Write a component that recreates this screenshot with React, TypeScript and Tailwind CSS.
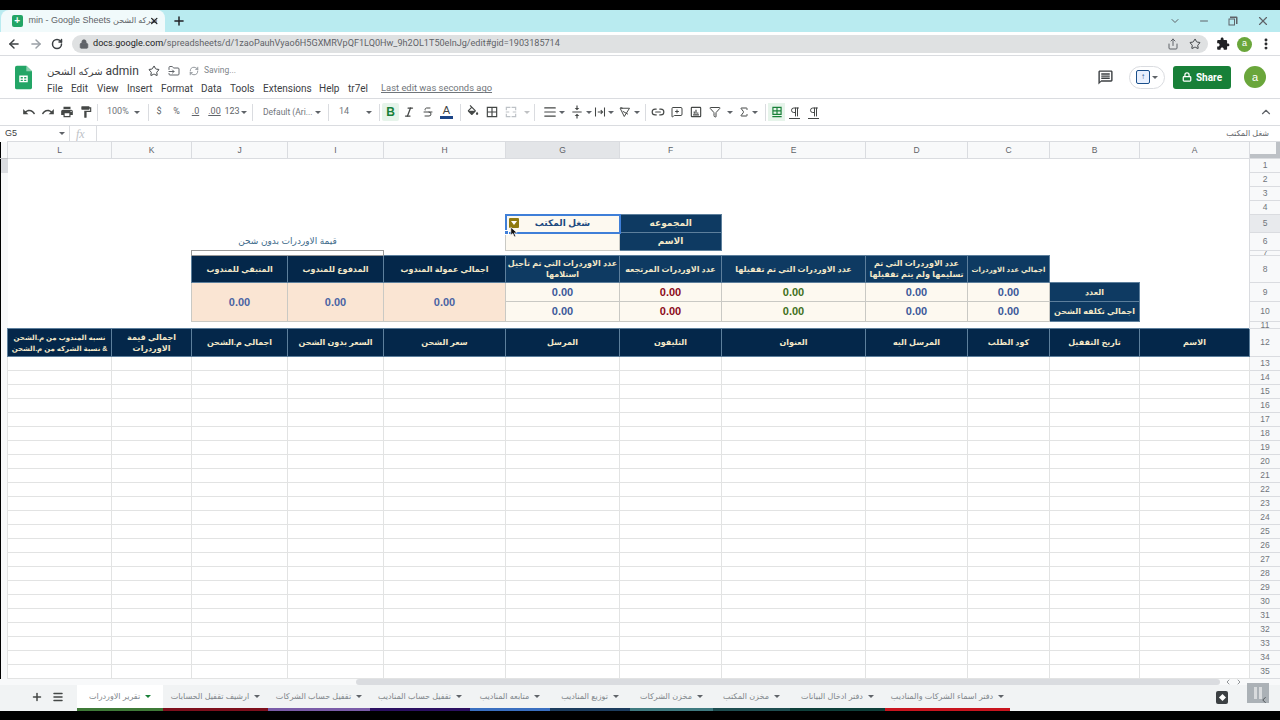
import { ReactNode } from "react";
import {
  ArrowLeft,
  ArrowRight,
  RotateCw,
  Lock,
  Star,
  Share,
  Plus,
  X,
  Minus,
  ChevronDown,
  ChevronUp,
  ChevronLeft,
  ChevronRight,
  EllipsisVertical,
  FolderInput,
  RefreshCw,
  Italic,
  Strikethrough,
  Link2,
  MessageSquarePlus,
  Sigma,
  Pilcrow,
  Menu,
  AlignJustify,
  Funnel,
} from "lucide-react";

const arabic = "font-['Liberation_Sans','DejaVu_Sans',sans-serif]";

const columns = ["L", "K", "J", "I", "H", "G", "F", "E", "D", "C", "B", "A"];

const sheetTabs = [
  { name: "تقرير الاوردرات", w: "w-[86px]", strip: "bg-[#3f7a38]", active: true },
  { name: "ارشيف تقفيل الحسابات", w: "w-[105px]", strip: "bg-[#7d0f1c]" },
  { name: "تقفيل حساب الشركات", w: "w-[102px]", strip: "bg-[#7a5ca8]" },
  { name: "تقفيل حساب المناديب", w: "w-[100px]", strip: "bg-[#2c1062]" },
  { name: "متابعه المناديب", w: "w-[80px]", strip: "bg-[#3a6fc0]" },
  { name: "توزيع المناديب", w: "w-[80px]", strip: "bg-[#1c3c5e]" },
  { name: "مخزن الشركات", w: "w-[83px]", strip: "bg-[#3f7a80]" },
  { name: "مخزن المكتب", w: "w-[77px]", strip: "bg-[#1e4d50]" },
  { name: "دفتر ادخال البيانات", w: "w-[95px]", strip: "bg-[#0f3f3a]" },
  { name: "دفتر اسماء الشركات والمناديب", w: "w-[125px]", strip: "bg-[#c8141e]" },
];

function Material({ d, className = "w-3.5 h-3.5" }: { d: string; className?: string }) {
  return (
    <svg viewBox="0 0 24 24" fill="currentColor" className={className}>
      <path d={d} />
    </svg>
  );
}

function Caret({ className = "" }: { className?: string }) {
  return <span className={`inline-block w-0 h-0 shrink-0 border-x-[3px] border-x-transparent border-t-[3px] border-t-[#5f6368] ${className}`} />;
}

function Sep({ className = "mx-[2px]" }: { className?: string }) {
  return <span className={`w-px h-[17px] bg-[#dadce0] shrink-0 ${className}`} />;
}

function Tool({ children, className = "w-[19px]" }: { children: ReactNode; className?: string }) {
  return <span className={`flex items-center justify-center h-[18px] shrink-0 text-[#444746] ${className}`}>{children}</span>;
}

function SheetsLogo({ className }: { className: string }) {
  return (
    <svg viewBox="0 0 18 25" className={className}>
      <path d="M2 0h10l6 6v17a2 2 0 0 1-2 2H2a2 2 0 0 1-2-2V2a2 2 0 0 1 2-2z" fill="#23a566" />
      <path d="M12 0l6 6h-6z" fill="#8ed1b1" />
      <path d="M4.5 10.5h9v7h-9z M6 12v1.5h2.3V12z M9.7 12v1.5H12V12z M6 15v1.2h2.3V15z M9.7 15v1.2H12V15z" fill="#fff" fillRule="evenodd" />
    </svg>
  );
}

function Head({ children, dark, small }: { children?: ReactNode; dark?: boolean; small?: boolean }) {
  return (
    <td
      dir="rtl"
      className={`border border-[#5d7f9c] p-0 text-center align-middle leading-[11px] font-bold whitespace-nowrap overflow-hidden text-[#f3e8c8] ${small ? "text-[7px]" : "text-[8px]"} ${dark ? "bg-[#04274a]" : "bg-[#0e3a62]"}`}
    >
      {children}
    </td>
  );
}

function Val({ color, rowSpan, peach }: { color: string; rowSpan?: number; peach?: boolean }) {
  return (
    <td
      rowSpan={rowSpan}
      className={`border border-[#c9c9c4] p-0 text-center align-middle text-[11px] leading-none font-bold ${color} ${peach ? "bg-[#fae5d3]" : "bg-[#fdf9f0]"}`}
    >
      0.00
    </td>
  );
}

function Row({ n, h, inner, active, gutter = "bg-[#f8f9fa]", children }: { n: number; h: string; inner: string; active?: boolean; gutter?: string; children: ReactNode }) {
  return (
    <tr className={h}>
      <td className={`border-l border-l-black p-0 ${gutter}`} />
      {children}
      <td className={`border border-[#dadce0] p-0 text-center align-middle text-[8.5px] leading-none text-[#70757a] ${active ? "bg-[#e8eaed]" : "bg-[#f8f9fa]"}`}>
        <div className={`flex items-center justify-center overflow-hidden ${inner}`}>{n}</div>
      </td>
    </tr>
  );
}

function Empty({ span }: { span: number }) {
  return <td colSpan={span} className="p-0" />;
}

function GridRows() {
  const nums = Array.from({ length: 23 }, (_, i) => i + 13);
  return (
    <>
      {nums.map((n) => (
        <Row key={n} n={n} h="h-[14px]" inner="h-[13px]">
          {columns.map((c) => (
            <td key={c} className="border border-[#e2e3e3] p-0" />
          ))}
        </Row>
      ))}
    </>
  );
}

export default function App() {
  return (
    <div className={`w-[1280px] h-[720px] overflow-hidden bg-black flex flex-col pt-[10px] ${arabic}`}>
      {/* browser tab strip */}
      <div className="h-[22px] shrink-0 bg-[#b9ebf0] flex items-center pl-[1px]">
        <div className="w-[164px] h-full bg-[#f1fafb] rounded-t-lg flex items-center pl-[11px] pr-[6px] shrink-0">
          <div className="w-3 h-3 rounded-[2px] bg-[#23a566] flex items-center justify-center text-white text-[10px] font-bold leading-none">+</div>
          <span className="ml-[6px] w-[120px] whitespace-nowrap text-[9px] text-[#5f6368]">
            min - Google Sheets <span className="text-[8px]">شركه الشحن</span>
          </span>
          <X className="w-3 h-3 text-[#202124]" strokeWidth={3} />
        </div>
        <Plus className="w-3.5 h-3.5 ml-[7px] text-[#202124]" strokeWidth={2.5} />
        <div className="ml-auto flex items-center gap-[17px] pr-[10px] text-[#5f6368]">
          <ChevronDown className="w-3 h-3" />
          <Minus className="w-3 h-3" />
          <Material className="w-3 h-3" d="M6 3h13a2 2 0 0 1 2 2v13h-3V6H6z M3 7h13v14H3z M5 9v10h9V9z" />
          <X className="w-3.5 h-3.5" />
        </div>
      </div>

      {/* address row */}
      <div className="h-[24px] shrink-0 bg-white border-b border-[#dadce0] flex items-center pl-[7px] pt-[1px]">
        <ArrowLeft className="w-3.5 h-3.5 text-[#3c4043]" strokeWidth={2.5} />
        <ArrowRight className="w-3.5 h-3.5 ml-[8px] text-[#9aa0a6]" strokeWidth={2.5} />
        <RotateCw className="w-3 h-3 ml-[8px] text-[#3c4043]" strokeWidth={3} />
        <div className="ml-[9px] w-[1136px] h-[18px] rounded-full bg-[#dfe1e2] flex items-center pl-[7px] pr-[7px]">
          <Lock className="w-2.5 h-2.5 text-[#5f6368]" fill="#5f6368" />
          <span className="ml-[4px] text-[9.1px] whitespace-nowrap text-[#5f6368] font-['Roboto',sans-serif]">
            <span className="text-[#202124]">docs.google.com</span>/spreadsheets/d/1zaoPauhVyao6H5GXMRVpQF1LQ0Hw_9h2OL1T50elnJg/edit#gid=1903185714
          </span>
          <Share className="w-3 h-3 ml-auto text-[#5f6368]" />
          <Star className="w-3 h-3 ml-[10px] text-[#3c4043]" />
        </div>
        <Material className="w-3.5 h-3.5 ml-[8px] text-[#202124]" d="M20.5 11H19V7c0-1.1-.9-2-2-2h-4V3.5C13 2.12 11.88 1 10.5 1S8 2.12 8 3.5V5H4c-1.1 0-1.99.9-1.99 2v3.8H3.5c1.49 0 2.7 1.21 2.7 2.7s-1.21 2.7-2.7 2.7H2V20c0 1.1.9 2 2 2h3.8v-1.5c0-1.49 1.21-2.7 2.7-2.7 1.49 0 2.7 1.21 2.7 2.7V22H17c1.1 0 2-.9 2-2v-4h1.5c1.38 0 2.5-1.12 2.5-2.5S21.88 11 20.5 11z" />
        <div className="ml-[7px] w-[15px] h-[15px] rounded-full bg-[#6aa63b] text-white text-[9px] flex items-center justify-center">a</div>
        <EllipsisVertical className="w-3.5 h-3.5 ml-[7px] text-[#202124]" strokeWidth={3} />
      </div>

      {/* docs header */}
      <div className="h-[43px] shrink-0 bg-white border-b border-[#dadce0] flex items-center pl-[15px] pr-[14px]">
        <SheetsLogo className="w-[17px] h-[25px] mt-[1px]" />
        <div className="ml-[15px] flex flex-col pt-[5px]">
          <div className="flex items-center h-[16px] text-[#3c4043]">
            <span className="w-[92px] whitespace-nowrap text-[10px]">
              شركه الشحن <span className="text-[12px] font-['Roboto',sans-serif]">admin</span>
            </span>
            <Star className="w-3 h-3 ml-[9px] text-[#3c4043]" />
            <FolderInput className="w-3 h-3 ml-[8px] text-[#5f6368]" />
            <RefreshCw className="w-2.5 h-2.5 ml-[9px] text-[#80868b]" />
            <span className="ml-[5px] text-[8.5px] text-[#80868b] font-['Roboto',sans-serif]">Saving...</span>
          </div>
          <div className="flex items-center h-[16px] mt-[2px] text-[10px] text-[#3c4043] font-['Roboto',sans-serif] whitespace-nowrap">
            <span className="w-[24px]">File</span>
            <span className="w-[26px]">Edit</span>
            <span className="w-[30px]">View</span>
            <span className="w-[34px]">Insert</span>
            <span className="w-[40px]">Format</span>
            <span className="w-[29px]">Data</span>
            <span className="w-[33px]">Tools</span>
            <span className="w-[56px]">Extensions</span>
            <span className="w-[29px]">Help</span>
            <span className="w-[33px]">tr7el</span>
            <span className="underline text-[9.4px] text-[#70757a]">Last edit was seconds ago</span>
          </div>
        </div>
        <div className="ml-auto flex items-center">
          <Material className="w-[17px] h-[17px] text-[#3c4043]" d="M20 2H4c-1.1 0-2 .9-2 2v18l4-4h14c1.1 0 2-.9 2-2V4c0-1.1-.9-2-2-2zm0 14H6l-2 2V4h16v12zM6 12h12v2H6zm0-3h12v2H6zm0-3h12v2H6z" />
          <div className="ml-[15px] w-[36px] h-[23px] rounded-full border border-[#dadce0] flex items-center justify-center gap-[2px]">
            <span className="w-[14px] h-[14px] border-[1.5px] border-[#1a4f8b] rounded-[2px] bg-[#e8f0fe] flex items-center justify-center text-[#1a4f8b] text-[8px] leading-none font-bold">↑</span>
            <Caret />
          </div>
          <div className="ml-[8px] w-[58px] h-[23px] rounded-[3px] bg-[#188038] text-white text-[10px] font-bold flex items-center justify-center gap-[4px] font-['Roboto',sans-serif]">
            <Lock className="w-2.5 h-2.5" strokeWidth={3} />
            Share
          </div>
          <div className="ml-[13px] w-[22px] h-[22px] rounded-full bg-[#6aa63b] text-white text-[11px] flex items-center justify-center">a</div>
        </div>
      </div>

      {/* toolbar */}
      <div className="h-[27px] shrink-0 bg-white border-b border-[#dadce0] flex items-center pl-[19px] pr-[7px] font-['Roboto',sans-serif] text-[9px] text-[#5f6368] whitespace-nowrap">
        <Tool><Material d="M12.5 8c-2.65 0-5.05.99-6.9 2.6L2 7v9h9l-3.62-3.62c1.39-1.16 3.16-1.88 5.12-1.88 3.54 0 6.55 2.31 7.6 5.5l2.37-.78C21.08 11.03 17.15 8 12.5 8z" /></Tool>
        <Tool><Material d="M18.4 10.6C16.55 8.99 14.15 8 11.5 8c-4.65 0-8.58 3.03-9.96 7.22L3.9 16c1.05-3.19 4.05-5.5 7.6-5.5 1.95 0 3.73.72 5.12 1.88L13 16h9V7l-3.6 3.6z" /></Tool>
        <Tool><Material d="M19 8H5c-1.66 0-3 1.34-3 3v6h4v4h12v-4h4v-6c0-1.66-1.34-3-3-3zm-3 11H8v-5h8v5zm3-7c-.55 0-1-.45-1-1s.45-1 1-1 1 .45 1 1-.45 1-1 1zm-1-9H6v4h12V3z" /></Tool>
        <Tool><Material d="M18 4V3c0-.55-.45-1-1-1H5c-.55 0-1 .45-1 1v4c0 .55.45 1 1 1h12c.55 0 1-.45 1-1V6h1v4H9v11c0 .55.45 1 1 1h2c.55 0 1-.45 1-1v-9h8V4h-3z" /></Tool>
        <Sep />
        <span className="w-[46px] flex items-center justify-between pl-[7px] pr-[6px] text-[#70757a]">100%<Caret /></span>
        <Sep />
        <span className="w-[16px] text-center">$</span>
        <span className="w-[19px] text-center">%</span>
        <span className="w-[19px] text-center underline">.0</span>
        <span className="w-[19px] text-center underline">.00</span>
        <span className="w-[23px] flex items-center justify-center gap-[1px]">123<Caret /></span>
        <Sep className="ml-[5px] mr-[2px]" />
        <span className="w-[71px] flex items-center justify-between pl-[8px] pr-[5px] text-[8.5px] text-[#70757a]">Default (Ari...<Caret /></span>
        <Sep />
        <span className="w-[46px] flex items-center justify-between pl-[8px] pr-[5px] text-[#70757a]">14<Caret /></span>
        <Sep />
        <span className="w-[17px] h-[18px] rounded-[2px] bg-[#e6f4ea] flex items-center justify-center text-[12px] font-bold text-[#188038] font-['Liberation_Sans',sans-serif]">B</span>
        <Tool><Italic className="w-3 h-3" strokeWidth={2.5} /></Tool>
        <Tool><Strikethrough className="w-3 h-3" /></Tool>
        <Tool>
          <span className="flex flex-col items-center text-[11px] leading-[11px] text-[#444746] font-['Liberation_Sans',sans-serif]">
            A<span className="w-[13px] h-[2.5px] bg-[#1c4587]" />
          </span>
        </Tool>
        <Sep className="ml-[4px] mr-[2px]" />
        <Tool><Material d="M16.56 8.94L7.62 0 6.21 1.41l2.38 2.38-5.15 5.15c-.59.59-.59 1.54 0 2.12l5.5 5.5c.29.29.68.44 1.06.44s.77-.15 1.06-.44l5.5-5.5c.59-.58.59-1.53 0-2.12zM5.21 10L10 5.21 14.79 10H5.21zM19 11.5s-2 2.17-2 3.5c0 1.1.9 2 2 2s2-.9 2-2c0-1.33-2-3.5-2-3.5z" /></Tool>
        <Tool><Material d="M3 3v18h18V3H3zm8 16H5v-6h6v6zm0-8H5V5h6v6zm8 8h-6v-6h6v6zm0-8h-6V5h6v6z" /></Tool>
        <Tool className="w-[20px]"><Material className="w-3.5 h-3.5 text-[#bdc1c6]" d="M3 3h8v2H5v4H3zm10 0h8v6h-2V5h-6zM3 15h2v4h6v2H3zm16 0h2v6h-8v-2h6zM3 11h6v2H3zm12 0h6v2h-6z" /></Tool>
        <span className="w-[11px] flex justify-center"><Caret className="opacity-40" /></span>
        <Sep />
        <span className="w-[3px]" />
        <Tool><AlignJustify className="w-3.5 h-3.5" /></Tool>
        <Caret className="mr-[2px]" />
        <Tool><Material d="M8 19h3v4h2v-4h3l-4-4-4 4zm8-14h-3V1h-2v4H8l4 4 4-4zM4 11v2h16v-2H4z" /></Tool>
        <Caret />
        <Tool className="w-[16px]">
          <svg viewBox="0 0 16 16" className="w-3 h-3" fill="none" stroke="currentColor" strokeWidth="1.4">
            <path d="M2 2v12M14 2v12M5 8h6M9 5.5 11.5 8 9 10.5" />
          </svg>
        </Tool>
        <Caret className="mr-[1px]" />
        <Tool>
          <svg viewBox="0 0 16 16" className="w-3 h-3" fill="none" stroke="currentColor" strokeWidth="1.3">
            <path d="M1.5 3 14 3 7 14z M5 7l7 4M2 2l3 1" />
          </svg>
        </Tool>
        <Caret />
        <Sep className="ml-[5px] mr-[2px]" />
        <Tool><Link2 className="w-3.5 h-3.5" /></Tool>
        <Tool><MessageSquarePlus className="w-3 h-3" /></Tool>
        <Tool><Material d="M5 3h14a2 2 0 0 1 2 2v14a2 2 0 0 1-2 2H5a2 2 0 0 1-2-2V5a2 2 0 0 1 2-2zm0 2v14h14V5zm2 11h10v2H7zm1-5h2v4H8zm3-3h2v7h-2zm3 5h2v2h-2z" /></Tool>
        <Tool><Funnel className="w-3 h-3" /></Tool>
        <span className="w-[11px] flex justify-center"><Caret /></span>
        <Tool className="w-[17px]"><Sigma className="w-3 h-3" /></Tool>
        <Caret className="mr-[5px]" />
        <Sep />
        <Tool className="w-[17px] bg-[#e6f4ea]"><Material className="w-3.5 h-3.5 text-[#188038]" d="M4 3h16v14H4zm2 2v4h5V5zm7 0v4h5V5zM6 11v4h5v-4zm7 0v4h5v-4zM4 19h16v2H4z" /></Tool>
        <Tool>
          <span className="flex flex-col items-center">
            <Pilcrow className="w-3 h-3" />
            <span className="w-[11px] h-px bg-[#444746]" />
          </span>
        </Tool>
        <Tool>
          <span className="flex flex-col items-center">
            <Pilcrow className="w-3 h-3" />
            <span className="w-[11px] h-px bg-[#444746]" />
          </span>
        </Tool>
        <ChevronUp className="w-3.5 h-3.5 ml-auto text-[#5f6368]" />
      </div>

      {/* formula bar */}
      <div className="h-[15px] shrink-0 bg-white flex items-center pl-[5px] pr-[11px] text-[9px] text-[#3c4043]">
        <span className="w-[54px]">G5</span>
        <Caret />
        <Sep className="ml-[4px] h-[12px]" />
        <span className="ml-[6px] w-[16px] italic font-['Liberation_Serif',serif] text-[12px] text-[#bdc1c6]">fx</span>
        <Sep className="ml-[4px] h-[12px]" />
        <span dir="rtl" className="ml-auto text-[8px] text-[#5f6368]">شغل المكتب</span>
      </div>

      {/* sheet */}
      <table className="w-[1280px] shrink-0 table-fixed border-collapse bg-white">
        <colgroup>
          <col className="w-[7px]" />
          <col className="w-[104px]" />
          <col className="w-[80px]" />
          <col className="w-[96px]" />
          <col className="w-[96px]" />
          <col className="w-[122px]" />
          <col className="w-[114px]" />
          <col className="w-[102px]" />
          <col className="w-[144px]" />
          <col className="w-[102px]" />
          <col className="w-[82px]" />
          <col className="w-[90px]" />
          <col className="w-[110px]" />
          <col className="w-[31px]" />
        </colgroup>
        <tbody>
          <tr className="h-[17px]">
            <td className="border-l border-l-black border-b border-b-[#c0c2c5] bg-[#f8f9fa] p-0" />
            {columns.map((c) => (
              <td
                key={c}
                className={`border border-[#dadce0] p-0 text-center text-[8.5px] leading-none text-[#5f6368] ${c === "G" ? "bg-[#e3e5e8]" : "bg-[#f8f9fa]"}`}
              >
                {c}
              </td>
            ))}
            <td className="border border-[#dadce0] bg-[#f8f9fa] p-0 shadow-[inset_-4px_-4px_0_#bdc1c6]" />
          </tr>
          <Row n={1} h="h-[14px]" inner="h-[13px]" gutter="bg-[#dadce0]"><Empty span={12} /></Row>
          <Row n={2} h="h-[14px]" inner="h-[13px]"><Empty span={12} /></Row>
          <Row n={3} h="h-[14px]" inner="h-[13px]"><Empty span={12} /></Row>
          <Row n={4} h="h-[14px]" inner="h-[13px]"><Empty span={12} /></Row>
          <Row n={5} h="h-[18px]" inner="h-[17px]" active>
            <Empty span={5} />
            <td dir="rtl" className="relative border-2 border-[#3f7fd8] bg-[#fdf9f0] p-0 text-center text-[9px] leading-none font-bold text-[#1c4a80]">
              شغل المكتب
              <span className="absolute left-[2px] top-[2px] w-[10px] h-[10px] rounded-[1px] bg-[#8f7a10] flex items-center justify-center">
                <span className="w-0 h-0 border-x-[3px] border-x-transparent border-t-[4px] border-t-white" />
              </span>
              <span className="absolute left-[-3px] bottom-[-3px] w-[5px] h-[5px] bg-[#3f7fd8] border border-white" />
              <svg viewBox="0 0 10 14" className="absolute left-[3px] top-[10px] w-[8px] h-[12px] z-10">
                <path d="M1 1v10l2.5-2.2L5.4 13l1.8-.8-1.9-4.1H9z" fill="#111" stroke="#fff" strokeWidth="0.8" />
              </svg>
            </td>
            <Head>
              <span className="text-[9px]">المجموعه</span>
            </Head>
            <Empty span={5} />
          </Row>
          <Row n={6} h="h-[18px]" inner="h-[17px]">
            <Empty span={2} />
            <td dir="rtl" colSpan={2} className="p-0 text-center align-middle text-[9px] leading-none text-[#3d6a8a]">
              قيمة الاوردرات بدون شحن
            </td>
            <Empty span={1} />
            <td className="border border-[#c9c9c4] bg-[#fdf9f0] p-0" />
            <Head>
              <span className="text-[9px]">الاسم</span>
            </Head>
            <Empty span={5} />
          </Row>
          <Row n={7} h="h-[5px]" inner="h-[4px]">
            <Empty span={2} />
            <td colSpan={2} className="border border-[#999] p-0" />
            <Empty span={8} />
          </Row>
          <Row n={8} h="h-[27px]" inner="h-[26px]">
            <Empty span={2} />
            <Head dark>المتبقي للمندوب</Head>
            <Head dark>المدفوع للمندوب</Head>
            <Head dark>اجمالي عمولة المندوب</Head>
            <Head>عدد الاوردرات التي تم تأجيل<br />استلامها</Head>
            <Head>عدد الاوردرات المرتجعه</Head>
            <Head>عدد الاوردرات التي تم تقفيلها</Head>
            <Head>عدد الاوردرات التي تم<br />تسليمها ولم يتم تقفيلها</Head>
            <Head small>اجمالي عدد الاوردرات</Head>
            <Empty span={2} />
          </Row>
          <Row n={9} h="h-[19px]" inner="h-[18px]">
            <Empty span={2} />
            <Val color="text-[#4a63a3]" rowSpan={2} peach />
            <Val color="text-[#4a63a3]" rowSpan={2} peach />
            <Val color="text-[#4a63a3]" rowSpan={2} peach />
            <Val color="text-[#3c5a9a]" />
            <Val color="text-[#8b0a1a]" />
            <Val color="text-[#3f7021]" />
            <Val color="text-[#3c5a9a]" />
            <Val color="text-[#3c5a9a]" />
            <Head>العدد</Head>
            <Empty span={1} />
          </Row>
          <Row n={10} h="h-[20px]" inner="h-[19px]">
            <Empty span={2} />
            <Val color="text-[#3c5a9a]" />
            <Val color="text-[#8b0a1a]" />
            <Val color="text-[#3f7021]" />
            <Val color="text-[#3c5a9a]" />
            <Val color="text-[#3c5a9a]" />
            <Head>اجمالي تكلفه الشحن</Head>
            <Empty span={1} />
          </Row>
          <Row n={11} h="h-[7px]" inner="h-[6px]"><Empty span={12} /></Row>
          <Row n={12} h="h-[28px]" inner="h-[27px]">
            <Head dark small>نسبه المندوب من م.الشحن<br />& نسبة الشركه من م.الشحن</Head>
            <Head dark>اجمالي قيمة<br />الاوردرات</Head>
            <Head dark>اجمالي م.الشحن</Head>
            <Head dark>السعر بدون الشحن</Head>
            <Head dark>سعر الشحن</Head>
            <Head dark>المرسل</Head>
            <Head dark>التليفون</Head>
            <Head dark>العنوان</Head>
            <Head dark>المرسل اليه</Head>
            <Head dark>كود الطلب</Head>
            <Head dark>تاريخ التقفيل</Head>
            <Head dark>الاسم</Head>
          </Row>
          <GridRows />
        </tbody>
      </table>

      {/* horizontal scrollbar */}
      <div className="h-[6px] shrink-0 bg-[#f8f9fa] flex items-center pl-[356px]">
        <div className="w-[864px] h-[6px] rounded-full bg-[#dadce0]" />
        <ChevronLeft className="w-2 h-2 ml-[4px] text-[#5f6368]" />
        <ChevronRight className="w-2 h-2 ml-[3px] text-[#5f6368]" />
      </div>

      {/* sheet tabs */}
      <div className="relative h-[26px] shrink-0 bg-[#f1f3f4] flex pl-[31px]">
        <div className="w-[46px] flex items-center gap-[9px] pb-[2px] text-[#444746]">
          <Plus className="w-3 h-3" strokeWidth={3} />
          <Menu className="w-3 h-3" strokeWidth={3} />
        </div>
        {sheetTabs.map((tab) => (
          <div key={tab.name} className={`${tab.w} flex flex-col ${tab.active ? "bg-white" : ""}`}>
            <div className="flex-1 flex items-center justify-center gap-[5px] text-[8px] text-[#80868b] whitespace-nowrap">
              <span dir="rtl">{tab.name}</span>
              <Caret className={tab.active ? "border-t-[#188038]" : ""} />
            </div>
            <div className={`h-[3px] ${tab.strip}`} />
          </div>
        ))}
        <div className="absolute left-[1216px] top-[6px] w-[12px] h-[13px] rounded-[2px] bg-[#3c4043] flex items-center justify-center">
          <span className="w-[5px] h-[5px] rotate-45 bg-white" />
        </div>
        <div className="absolute left-[1247px] top-[-2px] w-[22px] h-[20px] bg-[#9aa0a6]/80 flex items-center justify-center gap-[2px]">
          <span className="w-[3px] h-[12px] bg-[#d9dbdd]" />
          <span className="w-[3px] h-[12px] bg-[#d9dbdd]" />
          <ChevronLeft className="absolute right-[0px] bottom-[-2px] w-2.5 h-2.5 text-[#3c4043]" />
        </div>
      </div>
    </div>
  );
}
